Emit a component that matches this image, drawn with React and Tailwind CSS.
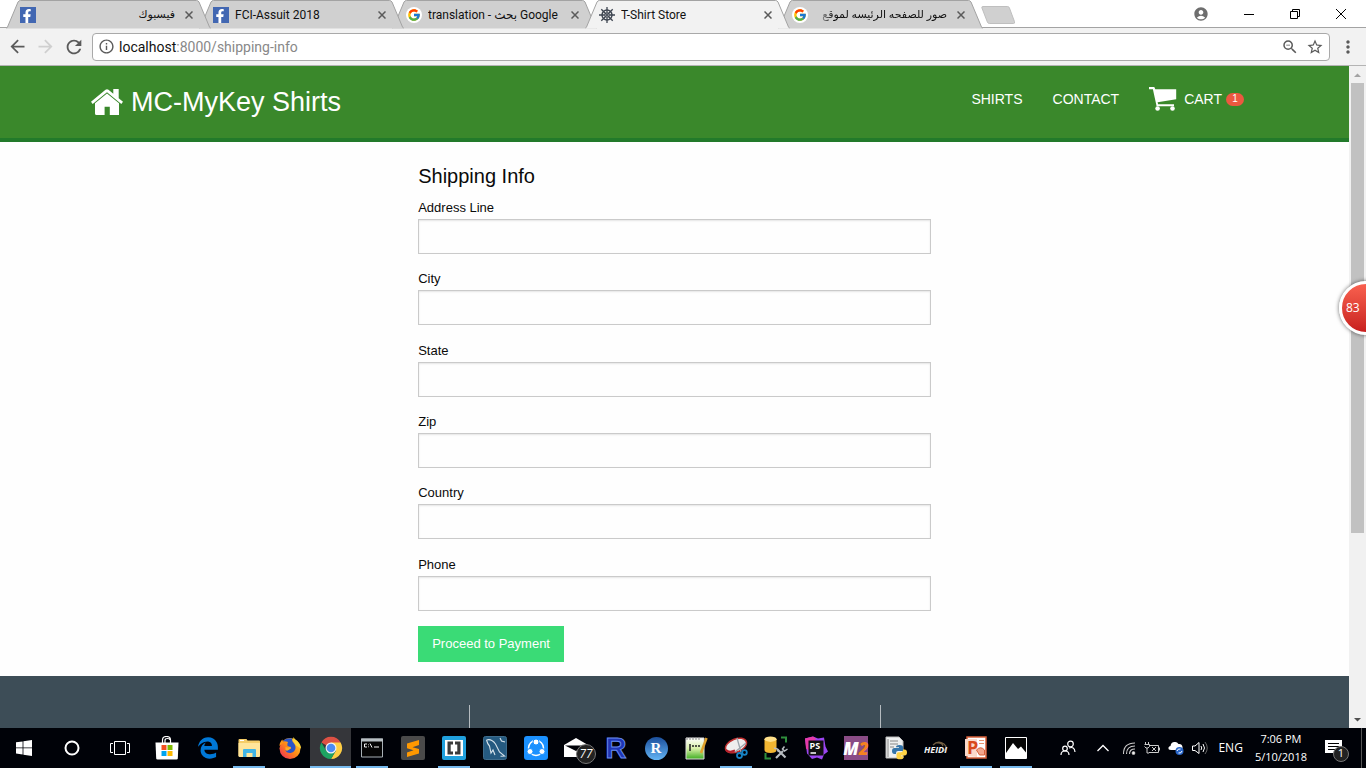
import React from 'react';
import { MdArrowBack, MdArrowForward, MdRefresh, MdInfoOutline, MdZoomOut, MdStarBorder, MdMoreVert, MdAccountCircle } from 'react-icons/md';
import { FcGoogle } from 'react-icons/fc';
import { FaFacebookF } from 'react-icons/fa';
import { FaEdgeLegacy } from 'react-icons/fa6';

const FacebookIcon = () => (
  <span className="flex size-4 shrink-0 items-end justify-end overflow-hidden bg-[#4267b2] pr-0.5 text-white">
    <FaFacebookF size={14} />
  </span>
);

const GoogleIcon = () => (
  <span className="flex size-4 shrink-0 items-center justify-center rounded-full bg-white">
    <FcGoogle size={14} />
  </span>
);

const HelmIcon = () => (
  <svg viewBox="0 0 16 16" className="size-4 shrink-0" fill="none" stroke="#3d4450">
    <circle cx="8" cy="8" r="5" strokeWidth="1.4" />
    <circle cx="8" cy="8" r="2.2" strokeWidth="1.2" />
    <path d="M8 0v5.500M8 10.500V16M0 8h5.500M10.500 8H16M2.300 2.300l4 4M9.700 9.700l4 4M13.700 2.300l-4 4M6.300 9.700l-4 4" strokeWidth="1.3" />
    <circle cx="8" cy="8" r=".8" fill="#3d4450" />
  </svg>
);

const tabs = [
  { title: 'فيسبوك', dir: 'rtl', icon: <FacebookIcon />, layer: 'z-40' },
  { title: 'FCI-Assuit 2018', dir: 'ltr', icon: <FacebookIcon />, layer: 'z-30' },
  { title: 'translation - بحث Google', dir: 'ltr', icon: <GoogleIcon />, layer: 'z-20' },
  { title: 'T-Shirt Store', dir: 'ltr', icon: <HelmIcon />, layer: 'z-40', active: true },
  { title: 'صور للصفحه الرئيسه لموقع', dir: 'rtl', icon: <GoogleIcon />, layer: 'z-10', fade: true },
];

function Tab({ tab }) {
  return (
    <div className={`relative -mr-3 flex h-7 w-[205px] min-w-0 items-center gap-1.5 px-3.5 pt-0.5 ${tab.layer} ${tab.active ? 'h-[29px] pb-px' : ''}`}>
      <svg viewBox="0 0 205 29" preserveAspectRatio="none" className="absolute inset-0 -z-10 h-[29px] w-full" aria-hidden="true">
        <path d="M0 28.500 L1.500 27 L12 2 Q12.800 .5 14.500 .5 H190.500 Q192 .5 193 2 L203.500 27 L205 28.500Z" fill={tab.active ? '#f2f2f2' : '#d0d0d0'} />
        <path d="M0 28.500 L1.500 27 L12 2 Q12.800 .5 14.500 .5 H190.500 Q192 .5 193 2 L203.500 27 L205 28.500" fill="none" stroke="#a3a3a3" />
      </svg>
      {tab.icon}
      <span dir={tab.dir} className={`min-w-0 flex-1 overflow-hidden whitespace-nowrap text-[#111] ${tab.dir === 'rtl' ? 'text-[11px]' : 'text-xs'} ${tab.fade ? '[mask-image:linear-gradient(to_right,transparent,black_20px)]' : ''}`}>{tab.title}</span>
      <button aria-label={`Close ${tab.title}`} className="flex size-4 shrink-0 items-center justify-center">
        <svg viewBox="0 0 8 8" className="size-2" stroke="#5a5a5a" strokeWidth="1.5"><path d="M.5 .5l7 7M7.500 .5l-7 7" /></svg>
      </button>
    </div>
  );
}

function TabStrip() {
  return (
    <div className="flex h-7 shrink-0 border-b border-[#a3a3a3] bg-white">
      <div className="flex min-w-0 pl-1.5 font-[Roboto,'DejaVu_Sans',sans-serif]">
        {tabs.map((t) => <Tab key={t.title} tab={t} />)}
      </div>
      <button aria-label="New tab" className="ml-2.5 mt-1.5 h-[18px] w-[34px] shrink-0">
        <svg viewBox="0 0 36 18" preserveAspectRatio="none" className="h-full w-full"><path d="M2 .5h26q1.500 0 2 1.200l5.500 14q.6 1.800-1 1.800H9q-1.600 0-2.200-1.300L1 2Q.5 .5 2 .5z" fill="#d0d0d0" stroke="#bdbdbd" /></svg>
      </button>
      <div className="flex flex-1 items-center justify-end gap-[34px] pr-[19px] text-black">
        <button aria-label="Profile" className="text-[#6e6e6e]"><MdAccountCircle size={16} /></button>
        <button aria-label="Minimize"><svg viewBox="0 0 12 12" className="size-3"><path d="M1 6.500h10" stroke="#000" /></svg></button>
        <button aria-label="Restore"><svg viewBox="0 0 12 12" className="size-3" fill="none" stroke="#000"><path d="M1.500 3.500h7v7h-7zM3.500 3.500v-2h7v7h-2" /></svg></button>
        <button aria-label="Close"><svg viewBox="0 0 12 12" className="size-3" fill="none" stroke="#000"><path d="M1 1l10 10M11 1L1 11" /></svg></button>
      </div>
    </div>
  );
}

function Toolbar() {
  return (
    <div className="flex h-[38px] shrink-0 items-center border-b border-[#b4b4b4] bg-[#f2f2f2] pl-[7px] pr-2 text-[#5a5a5a]">
      <div className="flex items-center gap-1.5">
        <button aria-label="Back"><MdArrowBack size={21} /></button>
        <button aria-label="Forward" className="ml-px text-[#cfcfcf]"><MdArrowForward size={21} /></button>
        <button aria-label="Reload" className="ml-px"><MdRefresh size={22} /></button>
      </div>
      <div className="ml-[7px] flex h-7 min-w-0 flex-1 items-center rounded-sm border border-[#a9a9a9] bg-white px-[5px]">
        <MdInfoOutline size={17} />
        <label className="relative ml-1 flex min-w-0 flex-1 items-center font-[Roboto,sans-serif] text-sm">
          <span className="whitespace-nowrap text-[#888]"><span className="text-[#111]">localhost</span>:8000/shipping-info</span>
          <input aria-label="Address" className="absolute inset-0 w-full bg-transparent outline-none" />
        </label>
        <button aria-label="Zoom"><MdZoomOut size={18} /></button>
        <button aria-label="Bookmark" className="ml-[7px]"><MdStarBorder size={18} /></button>
      </div>
      <button aria-label="Menu" className="ml-2"><MdMoreVert size={20} /></button>
    </div>
  );
}

function SiteHeader() {
  return (
    <header className="flex h-[76px] items-start justify-between border-b-4 border-[#227a2a] bg-[#3a882b] pl-[91px] pr-[105px] text-white">
      <a href="#home" className="flex items-center gap-2 pt-5 text-[27px] leading-8">
        <svg viewBox="0 0 32 26" className="h-[26px] w-8" fill="#fff">
          <path d="M0 12.800L14.500.8Q16 -.3 17.500.8L22.300 4.800V0H27.700V9.200L32 12.800L30.300 15L16 3.200L1.700 15Z" />
          <path d="M4 14.300L16 4.400L28 14.300V26H18.800V17.800H13.600V26H5.500Q4 26 4 24.500Z" />
        </svg>
        MC-MyKey Shirts
      </a>
      <nav className="flex items-center pt-[21px] text-sm leading-6">
        <a href="#shirts">SHIRTS</a>
        <a href="#contact" className="ml-[30px]">CONTACT</a>
        <a href="#cart" className="ml-[30px] flex items-center">
          <svg viewBox="0 0 28 24" className="h-6 w-7" fill="#fff">
            <path d="M0 0h5.300l1 2.200H27.200v10L8.600 15.200l.5 2.100H25v2H7.600L3.900 2.200H0z" />
            <circle cx="8.600" cy="21.500" r="2.300" /><circle cx="23.500" cy="21.500" r="2.300" />
          </svg>
          <span className="ml-[7px]">CART</span>
          <span className="ml-1 flex h-[13px] w-[18px] items-center justify-center rounded-full bg-[#ec5840] text-[10px] leading-none">1</span>
        </a>
      </nav>
    </header>
  );
}

const fields = ['Address Line', 'City', 'State', 'Zip', 'Country', 'Phone'];

function ShippingForm() {
  return (
    <main className="mx-auto w-[38%] pb-3.5 pt-5 text-[#0a0a0a]">
      <h1 className="text-xl leading-7">Shipping Info</h1>
      <form className="pt-2" onSubmit={(e) => e.preventDefault()}>
        <div className="grid min-h-[428px] grid-rows-6">
          {fields.map((f) => (
            <div key={f} className="flex flex-col">
              <label htmlFor={f} className="pb-px text-[13px] leading-5">{f}</label>
              <input id={f} name={f} type="text" className="h-[35px] w-full border border-[#cacaca] bg-[#fefefe] px-2 text-sm shadow-[inset_0_1px_2px_rgba(10,10,10,0.1)]" />
            </div>
          ))}
        </div>
        <button className="block h-9 bg-[#3adb76] px-3.5 text-[13px] text-white">Proceed to Payment</button>
      </form>
    </main>
  );
}

function Browser() {
  return (
    <div className="relative flex min-h-0 flex-1 overflow-hidden">
      <div className="flex min-w-0 flex-1 flex-col bg-[#fefefe] font-['Liberation_Sans',sans-serif]">
        <SiteHeader />
        <ShippingForm />
        <footer className="flex min-h-0 flex-1 bg-[#3d4d57] pt-[29px]">
          <div className="mx-auto grid w-full max-w-[1232px] grid-cols-3">
            <div />
            <div className="border-l border-[#b5bbbf]" />
            <div className="border-l border-[#b5bbbf]" />
          </div>
        </footer>
      </div>
      <div className="flex w-[17px] shrink-0 flex-col items-center bg-[#f1f1f1]">
        <svg viewBox="0 0 17 17" className="size-[17px] shrink-0"><path d="M5 11h7L8.500 7.500z" fill="#a3a3a3" /></svg>
        <div className="h-[68%] w-[13px] bg-[#c1c1c1]" />
        <svg viewBox="0 0 17 17" className="mt-auto size-[17px] shrink-0"><path d="M5 7h7l-3.500 3.500z" fill="#505050" /></svg>
      </div>
      <div className="absolute -right-[27px] top-[215px] flex h-[54px] w-[54px] items-center rounded-full border-[3px] border-white bg-linear-to-b from-[#f9604f] to-[#c81e1e] pl-1 text-xs text-white shadow-[0_0_4px_rgba(0,0,0,0.6)]">83</div>
    </div>
  );
}

const Svg = ({ children, ...p }) => <svg viewBox="0 0 24 24" className="size-6" fill="none" {...p}>{children}</svg>;

const Cylinder = () => (
  <Svg>
    <path d="M17 1.500h5v5M1.500 17v5.500H7" stroke="#2f8f3d" strokeWidth="2" />
    <path d="M.5 3v11q0 3 6 3t6-3V3z" fill="#f2b632" /><ellipse cx="6.500" cy="3.200" rx="6" ry="2.700" fill="#ffe08a" />
    <path d="M12 22l7-7M13.500 13.500l8 8" stroke="#b8bdc2" strokeWidth="2.200" />
    <path d="M23.500 13l-3 2-2-2 2-2.500M10 12l3.500 1 1 3" stroke="#b8bdc2" strokeWidth="1.500" />
  </Svg>
);

const apps = [
  { name: 'Store', icon: <Svg><path d="M7.500 7V4q0-3.500 4-3.500t4 3.500v3M10 7V4.500q0-2 2.500-2T15 4" stroke="#fff" strokeWidth="1.200" /><path d="M.5 6.500h23l-.7 16q-.1 1-1.300 1H2.500q-1.200 0-1.300-1z" fill="#fff" /><path fill="#f25022" d="M6.500 9h5v5h-5z" /><path fill="#7fba00" d="M12.500 9h5v5h-5z" /><path fill="#00a4ef" d="M6.500 15h5v5h-5z" /><path fill="#ffb900" d="M12.500 15h5v5h-5z" /></Svg> },
  { name: 'Edge', icon: <FaEdgeLegacy size={22} color="#0078d7" /> },
  { name: 'File Explorer', open: true, icon: <Svg><path d="M1.500 4q0-1 1-1h7l1 1.500H22q1 0 1 1V20H1.500z" fill="#f5cd68" /><path d="M1.500 7h21.500v13q0 1-1 1H2.500q-1 0-1-1z" fill="#ffe59a" /><path d="M6 21v-7q0-1 1-1h11q1 0 1 1v7h-3.500v-4h-6v4z" fill="#40b4e5" /><path d="M3 4.500h4" stroke="#fff" /></Svg> },
  { name: 'Firefox', icon: <Svg><defs><linearGradient id="ff" x1="1" y1="0" x2="0" y2="1"><stop stopColor="#ffe03a" /><stop offset=".5" stopColor="#ff8a16" /><stop offset="1" stopColor="#f02060" /></linearGradient></defs><circle cx="12" cy="12.500" r="10.500" fill="url(#ff)" /><path d="M15.500 1q1 2.500 4 4.500 3.500 3 3.500 7l-5-3-3-4.500z" fill="#ffd53a" /><path d="M1.500 10Q1.500 6 4.500 3.500q0 2 1 3z" fill="#ff9416" /><path d="M5 5.500Q8 1.500 14 2.500q-.5 2.500 2 5 2.500 3 1 6.500-2 3.500-5 3-4 0-4.500-3l3.500-.5 2-2.300-3.500-1.200Q9 7.500 10 6 7.500 5 5 5.500z" fill="#2a55c8" /><path d="M7.500 11q2 1 5-.3l.5 1.800-2.500 1.500q-1.500 1.500-3 0z" fill="#ffad22" /></Svg> },
  { name: 'Chrome', open: true, active: true, icon: <Svg><path d="M12 12L2.400 6.500A11 11 0 0121.600 6.500z" fill="#dd5144" /><path d="M12 6.500h9.600A11 11 0 0112 23l4.800-8.300z" fill="#ffce44" /><path d="M2.400 6.500A11 11 0 0012 23l4.800-8.200L12 17l-4.800-2.300z" fill="#1da362" /><circle cx="12" cy="12" r="5.500" fill="#f3f3f3" /><circle cx="12" cy="12" r="4.300" fill="#4c8bf5" /></Svg> },
  { name: 'Command Prompt', open: true, icon: <Svg><path d="M1.500 3h21v18h-21z" fill="#050505" stroke="#a8b0b5" /><path d="M1 2.500h22v3H1z" fill="#b8c0c4" /><path d="M7 8H4.500v3H7M8.500 8.500v.7M8.500 10.500v.7M10 7.500l2 4M14 11h5" stroke="#f4f4f4" /></Svg> },
  { name: 'Sublime Text', icon: <Svg><rect width="24" height="24" rx="2" fill="#4a4a4a" /><path d="M18 4v5l-6.500 2.200L18 13v4.500L6 21v-4.600l6.500-2.200L6 12.200V7.500z" fill="#ff9800" /></Svg> },
  { name: 'Brackets', open: true, icon: <Svg><rect width="24" height="24" rx="2" fill="#20a0dd" /><path d="M3 4h18v16H3z" fill="#fff" /><path d="M11 5.500H5.500v13H11v-3H8.700v-7H11zM13 5.500h5.500v13H13v-3h2.300v-7H13z" fill="#3b3b3b" /></Svg> },
  { name: 'MySQL Workbench', icon: <Svg><rect x=".5" y=".5" width="23" height="23" rx="2" fill="#255a80" stroke="#3e6c8c" /><path d="M3.500 4q5-1.500 9 4 2 4 4 8l5 4-4 .3M3.500 4q1 4 3 6l1.500 7 2-3 2 5M17 2l1.500 3L22 6" stroke="#d7e3ea" strokeWidth="1.100" /></Svg> },
  { name: 'SHAREit', icon: <Svg><rect width="24" height="24" rx="3" fill="#1b91ff" /><circle cx="12" cy="12" r="7.500" stroke="#fff" strokeWidth="1.500" /><g fill="#fff" stroke="#1b91ff"><circle cx="12" cy="6" r="3" /><circle cx="6" cy="15.500" r="3" /><circle cx="18" cy="15.500" r="3" /></g></Svg> },
  { name: 'Mail', icon: <span className="relative flex"><Svg><path d="M0 9L12 2l12 7v12H0z" fill="#fff" /><path d="M1 9.500h22L12 15z" fill="#000208" /></Svg><span className="absolute -bottom-1 left-3 flex size-5 items-center justify-center rounded-full border border-[#777] bg-[#222] text-xs italic text-white">77</span></span> },
  { name: 'R', icon: <span className="font-['Liberation_Sans',sans-serif] text-[29px] font-bold leading-6 text-[#1e36b5] [-webkit-text-stroke:1px_#6b8df0]">R</span> },
  { name: 'RStudio', icon: <span className="flex size-[23px] items-center justify-center rounded-full bg-linear-to-b from-[#1c4f9c] to-[#65b5f5] font-['Liberation_Serif',serif] text-[15px] font-bold text-white">R</span> },
  { name: 'Notepad++', icon: <Svg><defs><linearGradient id="np" x2="0" y2="1"><stop stopColor="#fff" /><stop offset=".5" stopColor="#d9f1a8" /><stop offset="1" stopColor="#3fae22" /></linearGradient></defs><path d="M2 2h18v21H2z" fill="url(#np)" stroke="#ddd" /><path d="M3 1v3M6 1v3M9 1v3M12 1v3M15 1v3" stroke="#888" /><path d="M6 8v7M8 10h2M11 10h2M14 10h2" stroke="#222" strokeWidth="1.500" /><path d="M22.500 2L17 17" stroke="#e0a22c" strokeWidth="2.500" /></Svg> },
  { name: 'Snipping Tool', open: true, icon: <Svg><ellipse cx="12" cy="9.500" rx="11" ry="6.500" transform="rotate(-22 12 9.500)" fill="#eee" stroke="#c13131" strokeWidth="1.500" /><path d="M2 14q3 3 9 .5" stroke="#b51f2b" strokeWidth="2" /><path d="M13 2l4 14M22 7L11 16" stroke="#9ba5ad" strokeWidth="1.300" /><circle cx="15.500" cy="19.500" r="2.500" stroke="#1683c5" strokeWidth="1.800" /><circle cx="20.500" cy="16.500" r="2.300" stroke="#1683c5" strokeWidth="1.800" /></Svg> },
  { name: 'SQL Tools', icon: <Cylinder /> },
  { name: 'PhpStorm', icon: <Svg><path d="M1 2.500l8-2 5 2 6-1 1.500 9 2.500 5-4 3-2 5-5-2-5 1.500-5-5.500z" fill="#9b45f2" /><path d="M1 2.500l8-2 3 2-7 12-3-2z" fill="#e63aa8" /><path d="M4.500 4.500h15v15h-15z" fill="#111" /><path d="M6.500 17h5.500" stroke="#fff" strokeWidth="1.500" /><text x="5.500" y="12.500" fill="#fff" fontSize="9" fontWeight="bold" fontFamily="Open Sans, sans-serif">PS</text></Svg> },
  { name: 'M2', icon: <span className="flex size-6 items-center justify-center bg-[#8a4c86] text-[17px] font-extrabold italic leading-none text-white">M<span className="text-[#f58220]">2</span></span> },
  { name: 'Python', icon: <Svg><path d="M2 1h13l4 4v17H2z" fill="#eef0f0" stroke="#bbb" /><path d="M4 3v18M6 5h8M6 8h8M6 11h4" stroke="#888" /><path d="M12 11q0-2 3.500-2t3.500 2v4h-5q-2 0-2 2v1h-1.500q-2.500 0-2.500-3t2.500-3H15v-.7h-3z" fill="#3474a9" /><path d="M19 13.500h1.500q2.500 0 2.500 3t-2.500 3H17v.7h2.500v1q0 2-3.500 2t-3.500-2v-3q0-2 2-2H17q2 0 2-2z" fill="#ffd445" /></Svg> },
  { name: 'HeidiSQL', icon: <Svg><path d="M9 9q5-5 11-1 5 4-2 8M12 7q6-1 7 3" stroke="#725f43" strokeWidth="1.200" /><text x="0" y="17" fill="#f2f2f2" fontSize="9" fontStyle="italic" fontWeight="bold" fontFamily="Open Sans, sans-serif">HEIDI</text></Svg> },
  { name: 'PowerPoint', open: true, icon: <Svg><path d="M3 1h19v21H3z" fill="#fff" stroke="#d8603a" strokeWidth="1.500" /><path d="M1 3h12v18l-12-1z" fill="#fbd9cb" /><text x="3" y="18" fill="#d9481c" fontSize="18" fontWeight="bold" fontFamily="Open Sans, sans-serif">P</text><path d="M12.500 14q4-4.500 8 0v5h-5z" fill="#f1a58c" stroke="#d8603a" /><path d="M15 4.500h5M15 7.500h5" stroke="#e9936f" /></Svg> },
  { name: 'Photos', open: true, icon: <Svg><path d="M1.500 1.500h21v21h-21z" fill="#050505" stroke="#fff" /><path d="M2 17l7-10 5 6 3-2.500 5 6V22H2z" fill="#fff" /></Svg> },
];

function Taskbar() {
  return (
    <div className="flex h-10 shrink-0 items-stretch bg-[#000208] text-white">
      <div className="mr-0.5 flex">
        <button aria-label="Start" className="flex w-12 items-center justify-center"><svg viewBox="0 0 16 16" className="size-4" fill="#fff"><path d="M0 2.300l6.600-.9v6.100H0zM7.400 1.300L16 0v7.500H7.400zM0 8.300h6.600v6.200L0 13.600zM7.400 8.300H16V16l-8.600-1.300z" /></svg></button>
        <button aria-label="Cortana" className="flex w-12 items-center justify-center"><svg viewBox="0 0 16 16" className="size-4"><circle cx="8" cy="8" r="6.500" fill="none" stroke="#fff" strokeWidth="2" /></svg></button>
        <button aria-label="Task view" className="flex w-12 items-center justify-center"><svg viewBox="0 0 20 14" className="h-3.5 w-5" fill="none" stroke="#fff"><path d="M4.500 .5h11v13h-11zM3 2.500H.5v9H3M17 2.500h2.500v9H17" /></svg></button>
      </div>
      {apps.map((a, i) => (
        <button key={a.name} aria-label={a.name} className={`flex shrink-0 flex-col items-center justify-end ${i < 10 ? 'w-[41px]' : 'w-10'} ${a.active ? 'bg-[#35363a]' : ''}`}>
          <span className="flex flex-1 items-center pt-0.5">{a.icon}</span>
          <span className={`h-0.5 ${a.active ? 'w-full' : 'w-8'} ${a.open ? 'bg-[#76b9ed]' : ''}`} />
        </button>
      ))}
      <div className="ml-auto flex items-center">
        <button aria-label="People"><svg viewBox="0 0 16 16" className="size-4" fill="none" stroke="#fff" strokeWidth="1.200"><circle cx="10.500" cy="4" r="2.800" /><circle cx="5" cy="8.500" r="2.300" /><path d="M1 15q0-4 4-4t4 4M9 8q5.500-2 6 4" /></svg></button>
        <button aria-label="Hidden icons" className="ml-5"><svg viewBox="0 0 14 14" className="size-3.5" fill="none" stroke="#fff" strokeWidth="1.300"><path d="M1.500 10L7 4.500 12.500 10" /></svg></button>
        <svg viewBox="0 0 14 14" className="ml-3 size-3.5" fill="none" stroke="#ccc" strokeWidth="1.100"><path d="M1.500 13Q1.500 2 13 2M4.500 13Q4.500 5 13 5M7.500 13Q7.500 8 13 8" /><circle cx="11.500" cy="12" r="1.300" fill="#fff" /></svg>
        <svg viewBox="0 0 16 14" className="ml-2 h-3.5 w-4" fill="none" stroke="#ccc"><path d="M6 4.500h8.500v7H5M15.500 6.500v3M8 6l4 4M12 6l-4 4M1.500 1v2M4.500 1v2M.5 3.500h5v2l-1.500 1.500h-2L.5 5.500M3 7v5h2" /></svg>
        <svg viewBox="0 0 16 16" className="ml-2 size-4"><path d="M3 10Q0 10 .5 7.500 1 6 2.500 6 3 2 6.500 2 9 1.500 10.500 4 14 3.500 14.500 7 15 10 12 10z" fill="#fff" /><circle cx="11.500" cy="11" r="4" fill="#2865c8" /><path d="M9 11q.5-2.500 3.500-2M14 11q-.5 2.500-3.500 2" stroke="#fff" fill="none" /></svg>
        <svg viewBox="0 0 16 14" className="ml-2 h-3.5 w-4" fill="none" stroke="#fff"><path d="M.5 5h2.500l4-3.500v11L3 9.500H.5zM9 5q1.500 2 0 4M11 3q3 4 0 8" /><path d="M13 1q4.500 6 0 12" stroke="#666" /></svg>
        <span className="ml-2.5 text-xs">ENG</span>
        <div className="ml-3 text-center text-[11px] leading-[18px]"><div>7:06 PM</div><div>5/10/2018</div></div>
        <button aria-label="Notifications" className="relative ml-[18px] mr-[19px]"><svg viewBox="0 0 17 17" className="size-[17px]"><path d="M0 0h17v13h-5v4l-4-4H0z" fill="#fff" /><path d="M3 3.500h11M3 6.500h11M3 9.500h7" stroke="#000" /></svg>
          <span className="absolute left-2 top-1.5 flex size-4 items-center justify-center rounded-full border border-[#777] bg-[#222] text-[11px]">1</span></button>
        <div className="mr-1 h-10 w-px bg-[#555]" />
      </div>
    </div>
  );
}

export default function App() {
  return (
    <div className="flex h-screen flex-col overflow-hidden bg-white font-['Open_Sans','DejaVu_Sans',sans-serif]">
      <TabStrip />
      <Toolbar />
      <Browser />
      <Taskbar />
    </div>
  );
}
